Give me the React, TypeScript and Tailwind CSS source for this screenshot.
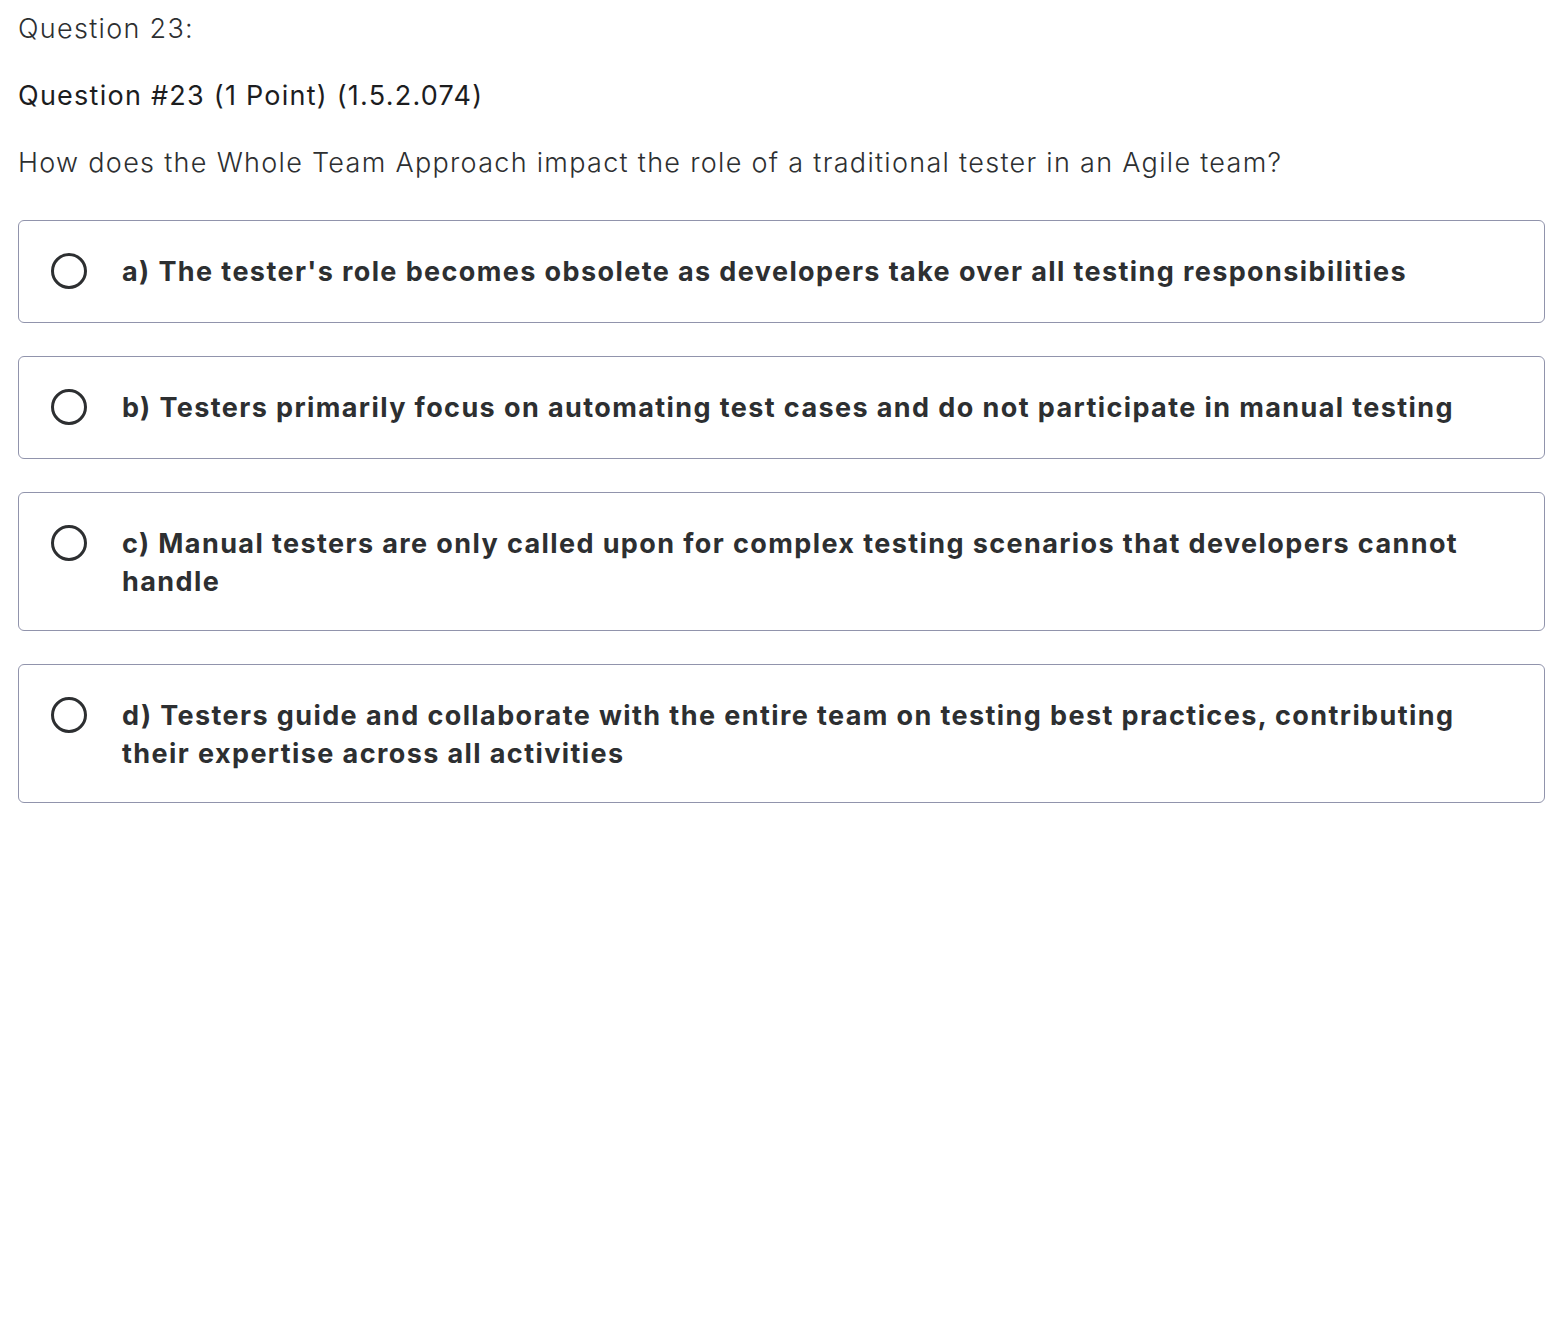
const options = [
  "a) The tester's role becomes obsolete as developers take over all testing responsibilities",
  "b) Testers primarily focus on automating test cases and do not participate in manual testing",
  "c) Manual testers are only called upon for complex testing scenarios that developers cannot handle",
  "d) Testers guide and collaborate with the entire team on testing best practices, contributing their expertise across all activities",
]

function RadioCircle() {
  return (
    <span className="flex size-[36px] shrink-0 items-center justify-center rounded-full border-[3px] border-[#2d2f31]" />
  )
}

export default function App() {
  return (
    <div className="min-h-[1336px] bg-white pl-[18px] pr-[21px] pt-[10px] text-[#2d2f31] [font-family:Inter,'Liberation_Sans',sans-serif]">
      <p className="text-[27px] font-light leading-[38px] tracking-[1.3px]">Question 23:</p>
      <p className="mt-[29px] text-[27px] font-normal leading-[38px] tracking-[1.25px] text-[#1c1d1f]">Question #23 (1 Point) (1.5.2.074)</p>
      <p className="mt-[29px] text-[27px] font-light leading-[38px] tracking-[1.3px]">
        How does the Whole Team Approach impact the role of a traditional tester in an Agile team?
      </p>

      <div className="mt-[38px] flex flex-col gap-[33px]">
        {options.map((opt) => (
          <label
            key={opt}
            className="flex min-h-[103px] cursor-pointer items-start gap-[35px] rounded-[6px] border border-[#9194ac] pb-[29px] pl-[32px] pr-[60px] pt-[32px]"
          >
            <RadioCircle />
            <span className="text-[27px] font-bold leading-[38px] tracking-[1.4px]">{opt}</span>
          </label>
        ))}
      </div>
    </div>
  )
}
